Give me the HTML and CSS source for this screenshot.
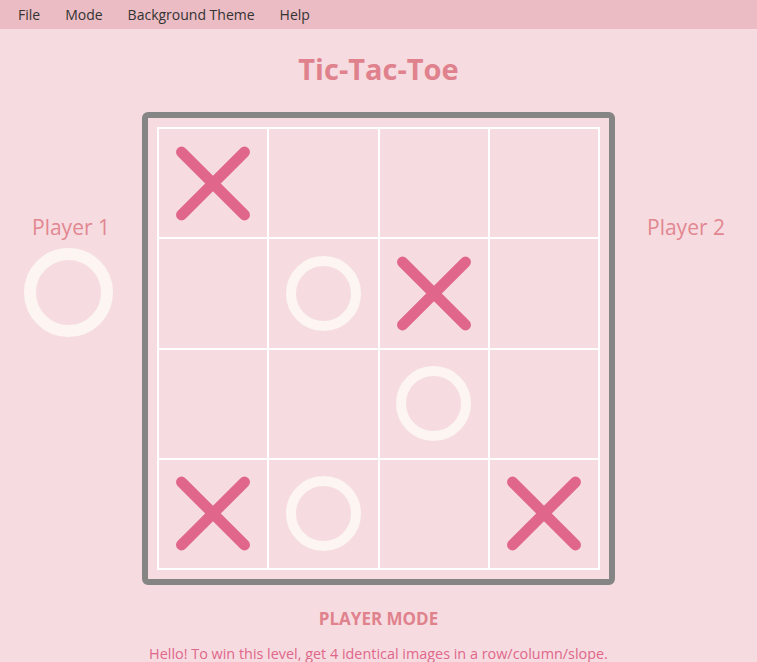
FILE: index.html
```html
<!DOCTYPE html>
<html>
<head>
<meta charset="utf-8">
<link rel="stylesheet" href="styles.css">
</head>
<body>
<nav class="menubar">
  <span class="menu-item">File</span>
  <span class="menu-item">Mode</span>
  <span class="menu-item">Background Theme</span>
  <span class="menu-item">Help</span>
</nav>
<h1 class="title">Tic-Tac-Toe</h1>
<main class="game">
  <section class="player">
    <div class="player-name">Player 1</div>
    <div class="big-o"></div>
  </section>
  <div class="board">
    <div class="grid">
      <div class="cell"><span class="x"></span></div>
      <div class="cell"></div>
      <div class="cell"></div>
      <div class="cell"></div>
      <div class="cell"></div>
      <div class="cell"><span class="o"></span></div>
      <div class="cell"><span class="x"></span></div>
      <div class="cell"></div>
      <div class="cell"></div>
      <div class="cell"></div>
      <div class="cell"><span class="o"></span></div>
      <div class="cell"></div>
      <div class="cell"><span class="x"></span></div>
      <div class="cell"><span class="o"></span></div>
      <div class="cell"></div>
      <div class="cell"><span class="x"></span></div>
    </div>
  </div>
  <section class="player">
    <div class="player-name">Player 2</div>
  </section>
</main>
<div class="mode">PLAYER MODE</div>
<p class="hint">Hello! To win this level, get 4 identical images in a row/column/slope.</p>
</body>
</html>
```
FILE: styles.css
```css
* { box-sizing: border-box; }
html, body { margin: 0; padding: 0; }
body {
  background: #f6dce0;
  font-family: "Open Sans", "Noto Sans", sans-serif;
  overflow: hidden;
}
.menubar {
  height: 29px;
  background: #ebbcc3;
  display: flex;
  align-items: center;
  padding-left: 18px;
  gap: 25px;
  font-size: 14px;
  color: #333;
}
.title {
  margin: 0;
  height: 83px;
  padding-top: 20px;
  text-align: center;
  font-size: 29px;
  font-weight: 700;
  color: #e0828d;
  line-height: 40px;
}
.game {
  display: flex;
  align-items: flex-start;
}
.player {
  width: 142px;
  display: flex;
  flex-direction: column;
  align-items: center;
  padding-top: 100px;
}
.player-name {
  font-size: 21px;
  color: #e28791;
  line-height: 30px;
}
.big-o {
  margin-top: 6px;
  margin-left: -6px;
  width: 89px;
  height: 89px;
  border-radius: 50%;
  border: 12px solid #fcf5f2;
}
.board {
  width: 473px;
  height: 473px;
  border: 6px solid #858585;
  border-radius: 6px;
  padding: 9px;
}
.grid {
  width: 443px;
  height: 443px;
  background: #ffffff;
  border: 2px solid #ffffff;
  display: grid;
  grid-template-columns: repeat(4, 1fr);
  grid-template-rows: repeat(4, 1fr);
  gap: 2px;
}
.cell {
  background: #f6dce0;
  display: flex;
  align-items: center;
  justify-content: center;
  position: relative;
}
.x {
  position: relative;
  width: 74px;
  height: 74px;
}
.x::before, .x::after {
  content: "";
  position: absolute;
  left: 50%;
  top: 50%;
  width: 100px;
  height: 11px;
  margin-left: -50px;
  margin-top: -5.5px;
  background: #e0668b;
  border-radius: 6px;
  transform: rotate(45deg);
}
.x::after { transform: rotate(-45deg); }
.o {
  width: 75px;
  height: 75px;
  border-radius: 50%;
  border: 10px solid #fcf5f2;
}
.mode {
  margin-top: 22px;
  text-align: center;
  font-size: 17px;
  font-weight: 700;
  color: #e0828d;
  line-height: 24px;
}
.hint {
  margin: 13px 0 0;
  text-align: center;
  font-size: 14.4px;
  color: #e0668b;
  line-height: 20px;
}
```
